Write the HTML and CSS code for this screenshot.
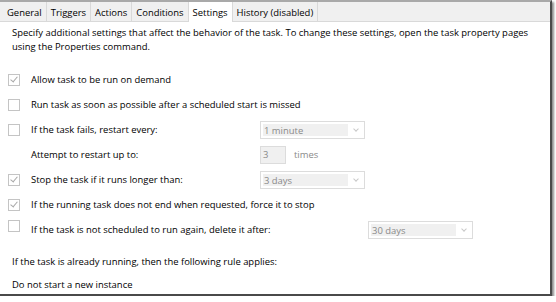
FILE: index.html
```html
<!DOCTYPE html>
<html lang="en">

<head>
    <meta charset="UTF-8">
    <title>Task Properties - Settings</title>
    <link rel="stylesheet" href="styles.css">
</head>

<body>
    <div class="window">
        <div class="tabs">
            <span class="tab">General</span>
            <span class="tab">Triggers</span>
            <span class="tab">Actions</span>
            <span class="tab">Conditions</span>
            <span class="tab active">Settings</span>
            <span class="tab">History (disabled)</span>
        </div>

        <div class="page">
            <p class="intro">Specify additional settings that affect the behavior of the task. To change these settings, open the task property pages using the Properties command.</p>

            <div class="row">
                <span class="check checked"></span>
                <span class="label">Allow task to be run on demand</span>
            </div>

            <div class="row">
                <span class="check"></span>
                <span class="label">Run task as soon as possible after a scheduled start is missed</span>
            </div>

            <div class="row">
                <span class="check"></span>
                <span class="label wide">If the task fails, restart every:</span>
                <span class="select"><span class="value">1 minute</span><span class="arrow"></span></span>
            </div>

            <div class="row">
                <span class="check blank"></span>
                <span class="label wide">Attempt to restart up to:</span>
                <span class="spin">3</span>
                <span class="unit">times</span>
            </div>

            <div class="row">
                <span class="check checked"></span>
                <span class="label wide">Stop the task if it runs longer than:</span>
                <span class="select"><span class="value">3 days</span><span class="arrow"></span></span>
            </div>

            <div class="row">
                <span class="check checked"></span>
                <span class="label">If the running task does not end when requested, force it to stop</span>
            </div>

            <div class="row">
                <span class="check raised"></span>
                <span class="label widest">If the task is not scheduled to run again, delete it after:</span>
                <span class="select"><span class="value">30 days</span><span class="arrow"></span></span>
            </div>

            <p class="rule first">If the task is already running, then the following rule applies:</p>
            <p class="rule">Do not start a new instance</p>
        </div>
    </div>
</body>

</html>
```

FILE: styles.css
```css
body {
    margin: 0;
    background-color: #ffffff;
    font-family: 'Open Sans', 'Noto Sans', sans-serif;
    font-size: 9.45px;
    color: #000000;
}

.window {
    width: 550px;
    height: 292px;
    border-top: 2px solid #a9a9a9;
    border-right: 2px solid #4a4a4a;
    border-bottom: 2px solid #4a4a4a;
    box-shadow: 2px 2px 2px rgba(0, 0, 0, 0.45);
    background-color: #ffffff;
    overflow: hidden;
}

.tabs {
    display: flex;
    height: 19px;
    padding-left: 3px;
    background-color: #f0f0f0;
    border-bottom: 1px solid #d9d9d9;
}

.tab {
    padding: 1px 4px 0;
    line-height: 19px;
    border-right: 1px solid #d9d9d9;
}

.tab.active {
    background-color: #ffffff;
    height: 19px;
}

.page {
    padding: 4px 0 0 12px;
}

.intro {
    margin: 0 0 14px;
    line-height: 13.5px;
    width: 530px;
}

.row {
    display: flex;
    align-items: center;
    height: 25px;
    margin-left: -4px;
}

.check {
    width: 10px;
    height: 10px;
    border: 1px solid #c4c4c4;
    margin-right: 11px;
    position: relative;
}

.check.blank {
    border-color: transparent;
}

.check.checked::after {
    content: "";
    position: absolute;
    left: 3px;
    top: 0;
    width: 3px;
    height: 6px;
    border-right: 1px solid #a8a8a8;
    border-bottom: 1px solid #a8a8a8;
    transform: rotate(40deg);
}

.check.raised {
    align-self: flex-start;
    margin-top: 3px;
}

.label {
    flex: none;
}

.label.wide {
    width: 229px;
}

.label.widest {
    width: 337px;
}

.select {
    display: flex;
    width: 103px;
    height: 16px;
    border: 1px solid #dcdcdc;
    color: #8a8a8a;
}

.value {
    flex: 1;
    margin: 2px 0 2px 2px;
    padding-left: 1px;
    line-height: 14px;
    background-color: #f0f0f0;
}

.arrow {
    width: 16px;
    position: relative;
}

.arrow::after {
    content: "";
    position: absolute;
    left: 6px;
    top: 5px;
    width: 3px;
    height: 3px;
    border-right: 1px solid #c8c8c8;
    border-bottom: 1px solid #c8c8c8;
    transform: rotate(45deg);
}

.spin {
    width: 22px;
    height: 16px;
    line-height: 16px;
    padding-left: 2px;
    border: 1px solid #dcdcdc;
    background-color: #f0f0f0;
    color: #8a8a8a;
}

.unit {
    margin-left: 8px;
    color: #8a8a8a;
}

.rule {
    margin: 0;
    line-height: 23px;
}

.rule.first {
    margin-top: 8px;
}
```
